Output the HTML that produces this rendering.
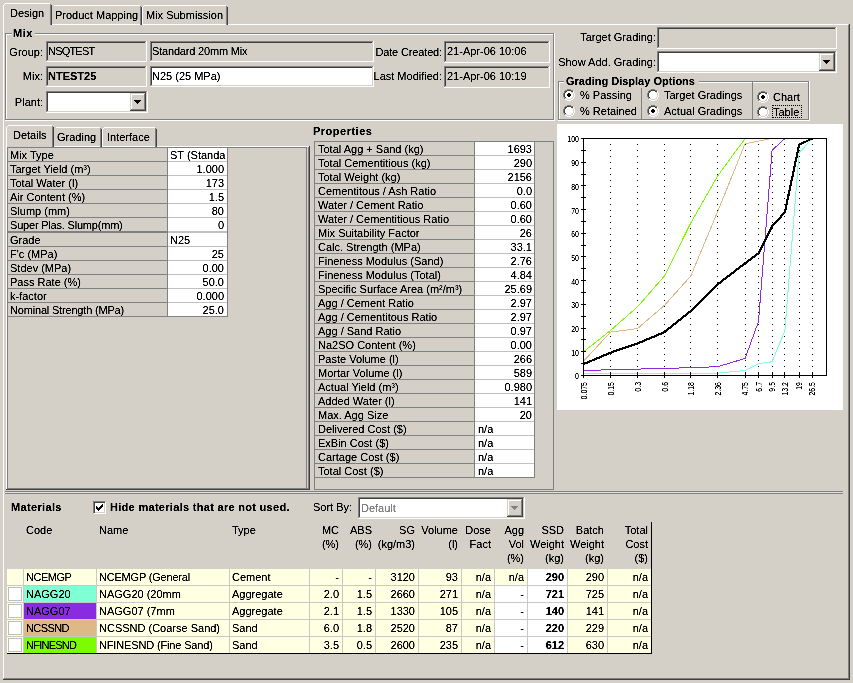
<!DOCTYPE html>
<html><head><meta charset="utf-8"><style>
html,body{margin:0;padding:0;}
body{width:853px;height:683px;overflow:hidden;background:#D4D0C8;position:relative;font-family:"Liberation Sans",sans-serif;font-size:11px;}
body div{position:absolute;}
.t{white-space:pre;line-height:13px;font-size:11px;color:#000;}
</style></head><body>
<svg width="0" height="0" style="position:absolute"><filter id="crisp" x="0" y="0" width="100%" height="100%"><feComponentTransfer><feFuncA type="linear" slope="2" intercept="-0.3"/></feComponentTransfer></filter><filter id="crisp2" filterUnits="userSpaceOnUse" x="0" y="0" width="853" height="683"><feComponentTransfer><feFuncA type="linear" slope="2" intercept="-0.3"/></feComponentTransfer></filter></svg><div id="root" style="left:0;top:0;width:853px;height:683px;will-change:transform">
<div style="left:3px;top:24px;width:845px;height:1px;background:#FFFFFF;"></div>
<div style="left:3px;top:24px;width:1px;height:654px;background:#FFFFFF;"></div>
<div style="left:848px;top:25px;width:1px;height:654px;background:#808080;"></div>
<div style="left:849px;top:24px;width:1px;height:656px;background:#404040;"></div>
<div style="left:4px;top:678px;width:845px;height:1px;background:#808080;"></div>
<div style="left:3px;top:679px;width:847px;height:1px;background:#404040;"></div>
<div style="left:54px;top:5px;width:86px;height:1px;background:#FFFFFF;"></div>
<div style="left:140px;top:6px;width:1px;height:19px;background:#808080;"></div>
<div style="left:141px;top:7px;width:1px;height:18px;background:#404040;"></div>
<div style="left:144px;top:5px;width:82px;height:1px;background:#FFFFFF;"></div>
<div style="left:143px;top:6px;width:1px;height:1px;background:#FFFFFF;"></div>
<div style="left:142px;top:7px;width:1px;height:18px;background:#FFFFFF;"></div>
<div style="left:226px;top:6px;width:1px;height:19px;background:#808080;"></div>
<div style="left:227px;top:7px;width:1px;height:18px;background:#404040;"></div>
<div style="left:4px;top:23px;width:46px;height:2px;background:#D4D0C8;"></div>
<div style="left:5px;top:3px;width:45px;height:1px;background:#FFFFFF;"></div>
<div style="left:4px;top:4px;width:1px;height:1px;background:#FFFFFF;"></div>
<div style="left:3px;top:5px;width:1px;height:20px;background:#FFFFFF;"></div>
<div style="left:50px;top:4px;width:1px;height:21px;background:#808080;"></div>
<div style="left:51px;top:5px;width:1px;height:20px;background:#404040;"></div>
<div style="left:5px;top:33px;width:549px;height:1px;background:#808080;"></div>
<div style="left:5px;top:33px;width:1px;height:87px;background:#808080;"></div>
<div style="left:6px;top:34px;width:547px;height:1px;background:#FFFFFF;"></div>
<div style="left:6px;top:34px;width:1px;height:85px;background:#FFFFFF;"></div>
<div style="left:5px;top:120px;width:550px;height:1px;background:#FFFFFF;"></div>
<div style="left:554px;top:33px;width:1px;height:88px;background:#FFFFFF;"></div>
<div style="left:6px;top:119px;width:548px;height:1px;background:#808080;"></div>
<div style="left:553px;top:34px;width:1px;height:86px;background:#808080;"></div>
<div style="left:12px;top:28px;width:23px;height:10px;background:#D4D0C8;"></div>
<div style="left:46px;top:41px;width:101px;height:21px;background:#D4D0C8;"></div>
<div style="left:46px;top:41px;width:100px;height:1px;background:#808080;"></div>
<div style="left:46px;top:41px;width:1px;height:20px;background:#808080;"></div>
<div style="left:47px;top:42px;width:98px;height:1px;background:#404040;"></div>
<div style="left:47px;top:42px;width:1px;height:18px;background:#404040;"></div>
<div style="left:46px;top:61px;width:101px;height:1px;background:#FFFFFF;"></div>
<div style="left:146px;top:41px;width:1px;height:21px;background:#FFFFFF;"></div>
<div style="left:47px;top:60px;width:99px;height:1px;background:#D4D0C8;"></div>
<div style="left:145px;top:42px;width:1px;height:19px;background:#D4D0C8;"></div>
<div style="left:46px;top:66px;width:101px;height:21px;background:#D4D0C8;"></div>
<div style="left:46px;top:66px;width:100px;height:1px;background:#808080;"></div>
<div style="left:46px;top:66px;width:1px;height:20px;background:#808080;"></div>
<div style="left:47px;top:67px;width:98px;height:1px;background:#404040;"></div>
<div style="left:47px;top:67px;width:1px;height:18px;background:#404040;"></div>
<div style="left:46px;top:86px;width:101px;height:1px;background:#FFFFFF;"></div>
<div style="left:146px;top:66px;width:1px;height:21px;background:#FFFFFF;"></div>
<div style="left:47px;top:85px;width:99px;height:1px;background:#D4D0C8;"></div>
<div style="left:145px;top:67px;width:1px;height:19px;background:#D4D0C8;"></div>
<div style="left:46px;top:91px;width:102px;height:22px;background:#FFFFFF;"></div>
<div style="left:46px;top:91px;width:101px;height:1px;background:#808080;"></div>
<div style="left:46px;top:91px;width:1px;height:21px;background:#808080;"></div>
<div style="left:47px;top:92px;width:99px;height:1px;background:#404040;"></div>
<div style="left:47px;top:92px;width:1px;height:19px;background:#404040;"></div>
<div style="left:46px;top:112px;width:102px;height:1px;background:#FFFFFF;"></div>
<div style="left:147px;top:91px;width:1px;height:22px;background:#FFFFFF;"></div>
<div style="left:47px;top:111px;width:100px;height:1px;background:#D4D0C8;"></div>
<div style="left:146px;top:92px;width:1px;height:20px;background:#D4D0C8;"></div>
<div style="left:130px;top:93px;width:16px;height:18px;background:#D4D0C8;"></div>
<div style="left:130px;top:93px;width:15px;height:1px;background:#D4D0C8;"></div>
<div style="left:130px;top:93px;width:1px;height:17px;background:#D4D0C8;"></div>
<div style="left:131px;top:94px;width:13px;height:1px;background:#FFFFFF;"></div>
<div style="left:131px;top:94px;width:1px;height:15px;background:#FFFFFF;"></div>
<div style="left:130px;top:110px;width:16px;height:1px;background:#404040;"></div>
<div style="left:145px;top:93px;width:1px;height:18px;background:#404040;"></div>
<div style="left:131px;top:109px;width:14px;height:1px;background:#808080;"></div>
<div style="left:144px;top:94px;width:1px;height:16px;background:#808080;"></div>
<div style="left:134px;top:100px;width:7px;height:1px;background:#000;"></div>
<div style="left:135px;top:101px;width:5px;height:1px;background:#000;"></div>
<div style="left:136px;top:102px;width:3px;height:1px;background:#000;"></div>
<div style="left:137px;top:103px;width:1px;height:1px;background:#000;"></div>
<div style="left:150px;top:41px;width:224px;height:21px;background:#D4D0C8;"></div>
<div style="left:150px;top:41px;width:223px;height:1px;background:#808080;"></div>
<div style="left:150px;top:41px;width:1px;height:20px;background:#808080;"></div>
<div style="left:151px;top:42px;width:221px;height:1px;background:#404040;"></div>
<div style="left:151px;top:42px;width:1px;height:18px;background:#404040;"></div>
<div style="left:150px;top:61px;width:224px;height:1px;background:#FFFFFF;"></div>
<div style="left:373px;top:41px;width:1px;height:21px;background:#FFFFFF;"></div>
<div style="left:151px;top:60px;width:222px;height:1px;background:#D4D0C8;"></div>
<div style="left:372px;top:42px;width:1px;height:19px;background:#D4D0C8;"></div>
<div style="left:150px;top:66px;width:224px;height:21px;background:#FFFFFF;"></div>
<div style="left:150px;top:66px;width:223px;height:1px;background:#808080;"></div>
<div style="left:150px;top:66px;width:1px;height:20px;background:#808080;"></div>
<div style="left:151px;top:67px;width:221px;height:1px;background:#404040;"></div>
<div style="left:151px;top:67px;width:1px;height:18px;background:#404040;"></div>
<div style="left:150px;top:86px;width:224px;height:1px;background:#FFFFFF;"></div>
<div style="left:373px;top:66px;width:1px;height:21px;background:#FFFFFF;"></div>
<div style="left:151px;top:85px;width:222px;height:1px;background:#D4D0C8;"></div>
<div style="left:372px;top:67px;width:1px;height:19px;background:#D4D0C8;"></div>
<div style="left:444px;top:41px;width:106px;height:22px;background:#D4D0C8;"></div>
<div style="left:444px;top:41px;width:105px;height:1px;background:#808080;"></div>
<div style="left:444px;top:41px;width:1px;height:21px;background:#808080;"></div>
<div style="left:445px;top:42px;width:103px;height:1px;background:#404040;"></div>
<div style="left:445px;top:42px;width:1px;height:19px;background:#404040;"></div>
<div style="left:444px;top:62px;width:106px;height:1px;background:#FFFFFF;"></div>
<div style="left:549px;top:41px;width:1px;height:22px;background:#FFFFFF;"></div>
<div style="left:445px;top:61px;width:104px;height:1px;background:#D4D0C8;"></div>
<div style="left:548px;top:42px;width:1px;height:20px;background:#D4D0C8;"></div>
<div style="left:444px;top:66px;width:106px;height:22px;background:#D4D0C8;"></div>
<div style="left:444px;top:66px;width:105px;height:1px;background:#808080;"></div>
<div style="left:444px;top:66px;width:1px;height:21px;background:#808080;"></div>
<div style="left:445px;top:67px;width:103px;height:1px;background:#404040;"></div>
<div style="left:445px;top:67px;width:1px;height:19px;background:#404040;"></div>
<div style="left:444px;top:87px;width:106px;height:1px;background:#FFFFFF;"></div>
<div style="left:549px;top:66px;width:1px;height:22px;background:#FFFFFF;"></div>
<div style="left:445px;top:86px;width:104px;height:1px;background:#D4D0C8;"></div>
<div style="left:548px;top:67px;width:1px;height:20px;background:#D4D0C8;"></div>
<div style="left:657px;top:27px;width:180px;height:22px;background:#D4D0C8;"></div>
<div style="left:657px;top:27px;width:179px;height:1px;background:#808080;"></div>
<div style="left:657px;top:27px;width:1px;height:21px;background:#808080;"></div>
<div style="left:658px;top:28px;width:177px;height:1px;background:#404040;"></div>
<div style="left:658px;top:28px;width:1px;height:19px;background:#404040;"></div>
<div style="left:657px;top:48px;width:180px;height:1px;background:#FFFFFF;"></div>
<div style="left:836px;top:27px;width:1px;height:22px;background:#FFFFFF;"></div>
<div style="left:658px;top:47px;width:178px;height:1px;background:#D4D0C8;"></div>
<div style="left:835px;top:28px;width:1px;height:20px;background:#D4D0C8;"></div>
<div style="left:657px;top:51px;width:180px;height:22px;background:#FFFFFF;"></div>
<div style="left:657px;top:51px;width:179px;height:1px;background:#808080;"></div>
<div style="left:657px;top:51px;width:1px;height:21px;background:#808080;"></div>
<div style="left:658px;top:52px;width:177px;height:1px;background:#404040;"></div>
<div style="left:658px;top:52px;width:1px;height:19px;background:#404040;"></div>
<div style="left:657px;top:72px;width:180px;height:1px;background:#FFFFFF;"></div>
<div style="left:836px;top:51px;width:1px;height:22px;background:#FFFFFF;"></div>
<div style="left:658px;top:71px;width:178px;height:1px;background:#D4D0C8;"></div>
<div style="left:835px;top:52px;width:1px;height:20px;background:#D4D0C8;"></div>
<div style="left:819px;top:53px;width:16px;height:18px;background:#D4D0C8;"></div>
<div style="left:819px;top:53px;width:15px;height:1px;background:#D4D0C8;"></div>
<div style="left:819px;top:53px;width:1px;height:17px;background:#D4D0C8;"></div>
<div style="left:820px;top:54px;width:13px;height:1px;background:#FFFFFF;"></div>
<div style="left:820px;top:54px;width:1px;height:15px;background:#FFFFFF;"></div>
<div style="left:819px;top:70px;width:16px;height:1px;background:#404040;"></div>
<div style="left:834px;top:53px;width:1px;height:18px;background:#404040;"></div>
<div style="left:820px;top:69px;width:14px;height:1px;background:#808080;"></div>
<div style="left:833px;top:54px;width:1px;height:16px;background:#808080;"></div>
<div style="left:823px;top:60px;width:7px;height:1px;background:#000;"></div>
<div style="left:824px;top:61px;width:5px;height:1px;background:#000;"></div>
<div style="left:825px;top:62px;width:3px;height:1px;background:#000;"></div>
<div style="left:826px;top:63px;width:1px;height:1px;background:#000;"></div>
<div style="left:558px;top:81px;width:251px;height:1px;background:#808080;"></div>
<div style="left:558px;top:81px;width:1px;height:39px;background:#808080;"></div>
<div style="left:559px;top:82px;width:249px;height:1px;background:#FFFFFF;"></div>
<div style="left:559px;top:82px;width:1px;height:37px;background:#FFFFFF;"></div>
<div style="left:558px;top:120px;width:252px;height:1px;background:#FFFFFF;"></div>
<div style="left:809px;top:81px;width:1px;height:40px;background:#FFFFFF;"></div>
<div style="left:559px;top:119px;width:250px;height:1px;background:#808080;"></div>
<div style="left:808px;top:82px;width:1px;height:38px;background:#808080;"></div>
<div style="left:564px;top:76px;width:135px;height:10px;background:#D4D0C8;"></div>
<div style="left:641px;top:88px;width:1px;height:31px;background:#808080;"></div>
<div style="left:752px;top:82px;width:1px;height:37px;background:#808080;"></div>
<svg style="position:absolute;left:563px;top:89px" width="12" height="12" viewBox="0 0 12 12" shape-rendering="crispEdges"><path d="M4 0h4v1H4zM2 1h2v1H2zM8 1h2v1H8zM1 2h1v2H1zM0 4h1v4H0zM1 8h1v2H1z" fill="#808080"/><path d="M4 1h4v1H4zM2 2h2v1H2zM8 2h2v1H8zM2 3h1v1H2zM1 4h1v4H1zM2 8h1v1H2z" fill="#404040"/><path d="M10 2h1v2h-1zM11 4h1v4h-1zM10 8h1v2h-1zM8 10h2v1H8zM2 10h2v1H2zM4 11h4v1H4z" fill="#FFFFFF"/><path d="M9 3h1v1H9zM10 4h1v4h-1zM9 8h1v1H9zM8 9h2v1H8zM2 9h2v1H2zM4 10h4v1H4z" fill="#D4D0C8"/><path d="M4 2h4v1H4zM3 3h6v1H3zM2 4h8v4H2zM3 8h6v1H3zM4 9h4v1H4z" fill="#FFFFFF"/><path d="M5 4h2v1H5zM4 5h4v2H4zM5 7h2v1H5z" fill="#000"/></svg>
<svg style="position:absolute;left:563px;top:105px" width="12" height="12" viewBox="0 0 12 12" shape-rendering="crispEdges"><path d="M4 0h4v1H4zM2 1h2v1H2zM8 1h2v1H8zM1 2h1v2H1zM0 4h1v4H0zM1 8h1v2H1z" fill="#808080"/><path d="M4 1h4v1H4zM2 2h2v1H2zM8 2h2v1H8zM2 3h1v1H2zM1 4h1v4H1zM2 8h1v1H2z" fill="#404040"/><path d="M10 2h1v2h-1zM11 4h1v4h-1zM10 8h1v2h-1zM8 10h2v1H8zM2 10h2v1H2zM4 11h4v1H4z" fill="#FFFFFF"/><path d="M9 3h1v1H9zM10 4h1v4h-1zM9 8h1v1H9zM8 9h2v1H8zM2 9h2v1H2zM4 10h4v1H4z" fill="#D4D0C8"/><path d="M4 2h4v1H4zM3 3h6v1H3zM2 4h8v4H2zM3 8h6v1H3zM4 9h4v1H4z" fill="#FFFFFF"/></svg>
<svg style="position:absolute;left:647px;top:89px" width="12" height="12" viewBox="0 0 12 12" shape-rendering="crispEdges"><path d="M4 0h4v1H4zM2 1h2v1H2zM8 1h2v1H8zM1 2h1v2H1zM0 4h1v4H0zM1 8h1v2H1z" fill="#808080"/><path d="M4 1h4v1H4zM2 2h2v1H2zM8 2h2v1H8zM2 3h1v1H2zM1 4h1v4H1zM2 8h1v1H2z" fill="#404040"/><path d="M10 2h1v2h-1zM11 4h1v4h-1zM10 8h1v2h-1zM8 10h2v1H8zM2 10h2v1H2zM4 11h4v1H4z" fill="#FFFFFF"/><path d="M9 3h1v1H9zM10 4h1v4h-1zM9 8h1v1H9zM8 9h2v1H8zM2 9h2v1H2zM4 10h4v1H4z" fill="#D4D0C8"/><path d="M4 2h4v1H4zM3 3h6v1H3zM2 4h8v4H2zM3 8h6v1H3zM4 9h4v1H4z" fill="#FFFFFF"/></svg>
<svg style="position:absolute;left:647px;top:105px" width="12" height="12" viewBox="0 0 12 12" shape-rendering="crispEdges"><path d="M4 0h4v1H4zM2 1h2v1H2zM8 1h2v1H8zM1 2h1v2H1zM0 4h1v4H0zM1 8h1v2H1z" fill="#808080"/><path d="M4 1h4v1H4zM2 2h2v1H2zM8 2h2v1H8zM2 3h1v1H2zM1 4h1v4H1zM2 8h1v1H2z" fill="#404040"/><path d="M10 2h1v2h-1zM11 4h1v4h-1zM10 8h1v2h-1zM8 10h2v1H8zM2 10h2v1H2zM4 11h4v1H4z" fill="#FFFFFF"/><path d="M9 3h1v1H9zM10 4h1v4h-1zM9 8h1v1H9zM8 9h2v1H8zM2 9h2v1H2zM4 10h4v1H4z" fill="#D4D0C8"/><path d="M4 2h4v1H4zM3 3h6v1H3zM2 4h8v4H2zM3 8h6v1H3zM4 9h4v1H4z" fill="#FFFFFF"/><path d="M5 4h2v1H5zM4 5h4v2H4zM5 7h2v1H5z" fill="#000"/></svg>
<svg style="position:absolute;left:757px;top:91px" width="12" height="12" viewBox="0 0 12 12" shape-rendering="crispEdges"><path d="M4 0h4v1H4zM2 1h2v1H2zM8 1h2v1H8zM1 2h1v2H1zM0 4h1v4H0zM1 8h1v2H1z" fill="#808080"/><path d="M4 1h4v1H4zM2 2h2v1H2zM8 2h2v1H8zM2 3h1v1H2zM1 4h1v4H1zM2 8h1v1H2z" fill="#404040"/><path d="M10 2h1v2h-1zM11 4h1v4h-1zM10 8h1v2h-1zM8 10h2v1H8zM2 10h2v1H2zM4 11h4v1H4z" fill="#FFFFFF"/><path d="M9 3h1v1H9zM10 4h1v4h-1zM9 8h1v1H9zM8 9h2v1H8zM2 9h2v1H2zM4 10h4v1H4z" fill="#D4D0C8"/><path d="M4 2h4v1H4zM3 3h6v1H3zM2 4h8v4H2zM3 8h6v1H3zM4 9h4v1H4z" fill="#FFFFFF"/><path d="M5 4h2v1H5zM4 5h4v2H4zM5 7h2v1H5z" fill="#000"/></svg>
<svg style="position:absolute;left:757px;top:106px" width="12" height="12" viewBox="0 0 12 12" shape-rendering="crispEdges"><path d="M4 0h4v1H4zM2 1h2v1H2zM8 1h2v1H8zM1 2h1v2H1zM0 4h1v4H0zM1 8h1v2H1z" fill="#808080"/><path d="M4 1h4v1H4zM2 2h2v1H2zM8 2h2v1H8zM2 3h1v1H2zM1 4h1v4H1zM2 8h1v1H2z" fill="#404040"/><path d="M10 2h1v2h-1zM11 4h1v4h-1zM10 8h1v2h-1zM8 10h2v1H8zM2 10h2v1H2zM4 11h4v1H4z" fill="#FFFFFF"/><path d="M9 3h1v1H9zM10 4h1v4h-1zM9 8h1v1H9zM8 9h2v1H8zM2 9h2v1H2zM4 10h4v1H4z" fill="#D4D0C8"/><path d="M4 2h4v1H4zM3 3h6v1H3zM2 4h8v4H2zM3 8h6v1H3zM4 9h4v1H4z" fill="#FFFFFF"/></svg>
<div style="left:772px;top:105px;width:30px;height:13px;box-sizing:border-box;border:1px dotted #000"></div>
<div style="left:7px;top:147px;width:1px;height:341px;background:#808080;"></div>
<div style="left:7px;top:147px;width:300px;height:1px;background:#808080;"></div>
<div style="left:306px;top:147px;width:1px;height:341px;background:#808080;"></div>
<div style="left:6px;top:146px;width:303px;height:1px;background:#FFFFFF;"></div>
<div style="left:6px;top:146px;width:1px;height:343px;background:#FFFFFF;"></div>
<div style="left:308px;top:147px;width:1px;height:342px;background:#808080;"></div>
<div style="left:7px;top:488px;width:302px;height:1px;background:#808080;"></div>
<div style="left:309px;top:146px;width:1px;height:344px;background:#404040;"></div>
<div style="left:6px;top:489px;width:304px;height:1px;background:#404040;"></div>
<div style="left:56px;top:127px;width:44px;height:1px;background:#FFFFFF;"></div>
<div style="left:100px;top:128px;width:1px;height:19px;background:#808080;"></div>
<div style="left:101px;top:129px;width:1px;height:18px;background:#404040;"></div>
<div style="left:104px;top:127px;width:51px;height:1px;background:#FFFFFF;"></div>
<div style="left:103px;top:128px;width:1px;height:1px;background:#FFFFFF;"></div>
<div style="left:102px;top:129px;width:1px;height:18px;background:#FFFFFF;"></div>
<div style="left:155px;top:128px;width:1px;height:19px;background:#808080;"></div>
<div style="left:156px;top:129px;width:1px;height:18px;background:#404040;"></div>
<div style="left:7px;top:145px;width:45px;height:2px;background:#D4D0C8;"></div>
<div style="left:8px;top:125px;width:44px;height:1px;background:#FFFFFF;"></div>
<div style="left:7px;top:126px;width:1px;height:1px;background:#FFFFFF;"></div>
<div style="left:6px;top:127px;width:1px;height:20px;background:#FFFFFF;"></div>
<div style="left:52px;top:126px;width:1px;height:21px;background:#808080;"></div>
<div style="left:53px;top:127px;width:1px;height:20px;background:#404040;"></div>
<div style="left:167px;top:148px;width:1px;height:169px;background:#808080;"></div>
<div style="left:227px;top:147px;width:1px;height:170px;background:#808080;"></div>
<div style="left:168px;top:148px;width:59px;height:13px;background:#FFFFFF;"></div>
<div style="left:8px;top:161px;width:159px;height:1px;background:#808080;"></div>
<div style="left:168px;top:161px;width:59px;height:1px;background:#C0C0C0;"></div>
<div style="left:168px;top:162px;width:59px;height:13px;background:#FFFFFF;"></div>
<div style="left:8px;top:175px;width:159px;height:1px;background:#808080;"></div>
<div style="left:168px;top:175px;width:59px;height:1px;background:#C0C0C0;"></div>
<div style="left:168px;top:176px;width:59px;height:13px;background:#FFFFFF;"></div>
<div style="left:8px;top:189px;width:159px;height:1px;background:#808080;"></div>
<div style="left:168px;top:189px;width:59px;height:1px;background:#C0C0C0;"></div>
<div style="left:168px;top:190px;width:59px;height:13px;background:#FFFFFF;"></div>
<div style="left:8px;top:203px;width:159px;height:1px;background:#808080;"></div>
<div style="left:168px;top:203px;width:59px;height:1px;background:#C0C0C0;"></div>
<div style="left:168px;top:204px;width:59px;height:13px;background:#FFFFFF;"></div>
<div style="left:8px;top:217px;width:159px;height:1px;background:#808080;"></div>
<div style="left:168px;top:217px;width:59px;height:1px;background:#C0C0C0;"></div>
<div style="left:168px;top:218px;width:59px;height:13px;background:#FFFFFF;"></div>
<div style="left:8px;top:231px;width:159px;height:1px;background:#808080;"></div>
<div style="left:168px;top:231px;width:59px;height:1px;background:#C0C0C0;"></div>
<div style="left:8px;top:232px;width:159px;height:1px;background:#808080;"></div>
<div style="left:168px;top:232px;width:59px;height:1px;background:#C0C0C0;"></div>
<div style="left:168px;top:233px;width:59px;height:13px;background:#FFFFFF;"></div>
<div style="left:8px;top:246px;width:159px;height:1px;background:#808080;"></div>
<div style="left:168px;top:246px;width:59px;height:1px;background:#C0C0C0;"></div>
<div style="left:168px;top:247px;width:59px;height:13px;background:#FFFFFF;"></div>
<div style="left:8px;top:260px;width:159px;height:1px;background:#808080;"></div>
<div style="left:168px;top:260px;width:59px;height:1px;background:#C0C0C0;"></div>
<div style="left:168px;top:261px;width:59px;height:13px;background:#FFFFFF;"></div>
<div style="left:8px;top:274px;width:159px;height:1px;background:#808080;"></div>
<div style="left:168px;top:274px;width:59px;height:1px;background:#C0C0C0;"></div>
<div style="left:168px;top:275px;width:59px;height:13px;background:#FFFFFF;"></div>
<div style="left:8px;top:288px;width:159px;height:1px;background:#808080;"></div>
<div style="left:168px;top:288px;width:59px;height:1px;background:#C0C0C0;"></div>
<div style="left:168px;top:289px;width:59px;height:13px;background:#FFFFFF;"></div>
<div style="left:8px;top:302px;width:159px;height:1px;background:#808080;"></div>
<div style="left:168px;top:302px;width:59px;height:1px;background:#C0C0C0;"></div>
<div style="left:168px;top:303px;width:59px;height:13px;background:#FFFFFF;"></div>
<div style="left:8px;top:316px;width:220px;height:1px;background:#808080;"></div>
<div style="left:314px;top:141px;width:1px;height:349px;background:#808080;"></div>
<div style="left:314px;top:141px;width:240px;height:1px;background:#808080;"></div>
<div style="left:553px;top:141px;width:1px;height:349px;background:#808080;"></div>
<div style="left:314px;top:489px;width:240px;height:1px;background:#808080;"></div>
<div style="left:474px;top:142px;width:1px;height:336px;background:#808080;"></div>
<div style="left:534px;top:142px;width:1px;height:336px;background:#808080;"></div>
<div style="left:475px;top:142px;width:59px;height:13px;background:#FFFFFF;"></div>
<div style="left:315px;top:155px;width:159px;height:1px;background:#808080;"></div>
<div style="left:475px;top:155px;width:59px;height:1px;background:#C0C0C0;"></div>
<div style="left:475px;top:156px;width:59px;height:13px;background:#FFFFFF;"></div>
<div style="left:315px;top:169px;width:159px;height:1px;background:#808080;"></div>
<div style="left:475px;top:169px;width:59px;height:1px;background:#C0C0C0;"></div>
<div style="left:475px;top:170px;width:59px;height:13px;background:#FFFFFF;"></div>
<div style="left:315px;top:183px;width:159px;height:1px;background:#808080;"></div>
<div style="left:475px;top:183px;width:59px;height:1px;background:#C0C0C0;"></div>
<div style="left:475px;top:184px;width:59px;height:13px;background:#FFFFFF;"></div>
<div style="left:315px;top:197px;width:159px;height:1px;background:#808080;"></div>
<div style="left:475px;top:197px;width:59px;height:1px;background:#C0C0C0;"></div>
<div style="left:475px;top:198px;width:59px;height:13px;background:#FFFFFF;"></div>
<div style="left:315px;top:211px;width:159px;height:1px;background:#808080;"></div>
<div style="left:475px;top:211px;width:59px;height:1px;background:#C0C0C0;"></div>
<div style="left:475px;top:212px;width:59px;height:13px;background:#FFFFFF;"></div>
<div style="left:315px;top:225px;width:159px;height:1px;background:#808080;"></div>
<div style="left:475px;top:225px;width:59px;height:1px;background:#C0C0C0;"></div>
<div style="left:475px;top:226px;width:59px;height:13px;background:#FFFFFF;"></div>
<div style="left:315px;top:239px;width:159px;height:1px;background:#808080;"></div>
<div style="left:475px;top:239px;width:59px;height:1px;background:#C0C0C0;"></div>
<div style="left:475px;top:240px;width:59px;height:13px;background:#FFFFFF;"></div>
<div style="left:315px;top:253px;width:159px;height:1px;background:#808080;"></div>
<div style="left:475px;top:253px;width:59px;height:1px;background:#C0C0C0;"></div>
<div style="left:475px;top:254px;width:59px;height:13px;background:#FFFFFF;"></div>
<div style="left:315px;top:267px;width:159px;height:1px;background:#808080;"></div>
<div style="left:475px;top:267px;width:59px;height:1px;background:#C0C0C0;"></div>
<div style="left:475px;top:268px;width:59px;height:13px;background:#FFFFFF;"></div>
<div style="left:315px;top:281px;width:159px;height:1px;background:#808080;"></div>
<div style="left:475px;top:281px;width:59px;height:1px;background:#C0C0C0;"></div>
<div style="left:475px;top:282px;width:59px;height:13px;background:#FFFFFF;"></div>
<div style="left:315px;top:295px;width:159px;height:1px;background:#808080;"></div>
<div style="left:475px;top:295px;width:59px;height:1px;background:#C0C0C0;"></div>
<div style="left:475px;top:296px;width:59px;height:13px;background:#FFFFFF;"></div>
<div style="left:315px;top:309px;width:159px;height:1px;background:#808080;"></div>
<div style="left:475px;top:309px;width:59px;height:1px;background:#C0C0C0;"></div>
<div style="left:475px;top:310px;width:59px;height:13px;background:#FFFFFF;"></div>
<div style="left:315px;top:323px;width:159px;height:1px;background:#808080;"></div>
<div style="left:475px;top:323px;width:59px;height:1px;background:#C0C0C0;"></div>
<div style="left:475px;top:324px;width:59px;height:13px;background:#FFFFFF;"></div>
<div style="left:315px;top:337px;width:159px;height:1px;background:#808080;"></div>
<div style="left:475px;top:337px;width:59px;height:1px;background:#C0C0C0;"></div>
<div style="left:475px;top:338px;width:59px;height:13px;background:#FFFFFF;"></div>
<div style="left:315px;top:351px;width:159px;height:1px;background:#808080;"></div>
<div style="left:475px;top:351px;width:59px;height:1px;background:#C0C0C0;"></div>
<div style="left:475px;top:352px;width:59px;height:13px;background:#FFFFFF;"></div>
<div style="left:315px;top:365px;width:159px;height:1px;background:#808080;"></div>
<div style="left:475px;top:365px;width:59px;height:1px;background:#C0C0C0;"></div>
<div style="left:475px;top:366px;width:59px;height:13px;background:#FFFFFF;"></div>
<div style="left:315px;top:379px;width:159px;height:1px;background:#808080;"></div>
<div style="left:475px;top:379px;width:59px;height:1px;background:#C0C0C0;"></div>
<div style="left:475px;top:380px;width:59px;height:13px;background:#FFFFFF;"></div>
<div style="left:315px;top:393px;width:159px;height:1px;background:#808080;"></div>
<div style="left:475px;top:393px;width:59px;height:1px;background:#C0C0C0;"></div>
<div style="left:475px;top:394px;width:59px;height:13px;background:#FFFFFF;"></div>
<div style="left:315px;top:407px;width:159px;height:1px;background:#808080;"></div>
<div style="left:475px;top:407px;width:59px;height:1px;background:#C0C0C0;"></div>
<div style="left:475px;top:408px;width:59px;height:13px;background:#FFFFFF;"></div>
<div style="left:315px;top:421px;width:159px;height:1px;background:#808080;"></div>
<div style="left:475px;top:421px;width:59px;height:1px;background:#C0C0C0;"></div>
<div style="left:475px;top:422px;width:59px;height:13px;background:#FFFFFF;"></div>
<div style="left:315px;top:435px;width:159px;height:1px;background:#808080;"></div>
<div style="left:475px;top:435px;width:59px;height:1px;background:#C0C0C0;"></div>
<div style="left:475px;top:436px;width:59px;height:13px;background:#FFFFFF;"></div>
<div style="left:315px;top:449px;width:159px;height:1px;background:#808080;"></div>
<div style="left:475px;top:449px;width:59px;height:1px;background:#C0C0C0;"></div>
<div style="left:475px;top:450px;width:59px;height:13px;background:#FFFFFF;"></div>
<div style="left:315px;top:463px;width:159px;height:1px;background:#808080;"></div>
<div style="left:475px;top:463px;width:59px;height:1px;background:#C0C0C0;"></div>
<div style="left:475px;top:464px;width:59px;height:13px;background:#FFFFFF;"></div>
<div style="left:315px;top:477px;width:220px;height:1px;background:#808080;"></div>
<div style="left:557px;top:124px;width:286px;height:286px;background:#FFFFFF;"></div>
<svg style="position:absolute;left:0;top:0" width="853" height="683"><path d="M610 144h1v1h-1zM610 150h1v1h-1zM610 156h1v1h-1zM610 162h1v1h-1zM610 168h1v1h-1zM610 174h1v1h-1zM610 180h1v1h-1zM610 186h1v1h-1zM610 192h1v1h-1zM610 198h1v1h-1zM610 204h1v1h-1zM610 210h1v1h-1zM610 216h1v1h-1zM610 222h1v1h-1zM610 228h1v1h-1zM610 234h1v1h-1zM610 240h1v1h-1zM610 246h1v1h-1zM610 252h1v1h-1zM610 258h1v1h-1zM610 264h1v1h-1zM610 270h1v1h-1zM610 276h1v1h-1zM610 282h1v1h-1zM610 288h1v1h-1zM610 294h1v1h-1zM610 300h1v1h-1zM610 306h1v1h-1zM610 312h1v1h-1zM610 318h1v1h-1zM610 324h1v1h-1zM610 330h1v1h-1zM610 336h1v1h-1zM610 342h1v1h-1zM610 348h1v1h-1zM610 354h1v1h-1zM610 360h1v1h-1zM610 366h1v1h-1zM610 372h1v1h-1zM637 144h1v1h-1zM637 150h1v1h-1zM637 156h1v1h-1zM637 162h1v1h-1zM637 168h1v1h-1zM637 174h1v1h-1zM637 180h1v1h-1zM637 186h1v1h-1zM637 192h1v1h-1zM637 198h1v1h-1zM637 204h1v1h-1zM637 210h1v1h-1zM637 216h1v1h-1zM637 222h1v1h-1zM637 228h1v1h-1zM637 234h1v1h-1zM637 240h1v1h-1zM637 246h1v1h-1zM637 252h1v1h-1zM637 258h1v1h-1zM637 264h1v1h-1zM637 270h1v1h-1zM637 276h1v1h-1zM637 282h1v1h-1zM637 288h1v1h-1zM637 294h1v1h-1zM637 300h1v1h-1zM637 306h1v1h-1zM637 312h1v1h-1zM637 318h1v1h-1zM637 324h1v1h-1zM637 330h1v1h-1zM637 336h1v1h-1zM637 342h1v1h-1zM637 348h1v1h-1zM637 354h1v1h-1zM637 360h1v1h-1zM637 366h1v1h-1zM637 372h1v1h-1zM664 144h1v1h-1zM664 150h1v1h-1zM664 156h1v1h-1zM664 162h1v1h-1zM664 168h1v1h-1zM664 174h1v1h-1zM664 180h1v1h-1zM664 186h1v1h-1zM664 192h1v1h-1zM664 198h1v1h-1zM664 204h1v1h-1zM664 210h1v1h-1zM664 216h1v1h-1zM664 222h1v1h-1zM664 228h1v1h-1zM664 234h1v1h-1zM664 240h1v1h-1zM664 246h1v1h-1zM664 252h1v1h-1zM664 258h1v1h-1zM664 264h1v1h-1zM664 270h1v1h-1zM664 276h1v1h-1zM664 282h1v1h-1zM664 288h1v1h-1zM664 294h1v1h-1zM664 300h1v1h-1zM664 306h1v1h-1zM664 312h1v1h-1zM664 318h1v1h-1zM664 324h1v1h-1zM664 330h1v1h-1zM664 336h1v1h-1zM664 342h1v1h-1zM664 348h1v1h-1zM664 354h1v1h-1zM664 360h1v1h-1zM664 366h1v1h-1zM664 372h1v1h-1zM690 144h1v1h-1zM690 150h1v1h-1zM690 156h1v1h-1zM690 162h1v1h-1zM690 168h1v1h-1zM690 174h1v1h-1zM690 180h1v1h-1zM690 186h1v1h-1zM690 192h1v1h-1zM690 198h1v1h-1zM690 204h1v1h-1zM690 210h1v1h-1zM690 216h1v1h-1zM690 222h1v1h-1zM690 228h1v1h-1zM690 234h1v1h-1zM690 240h1v1h-1zM690 246h1v1h-1zM690 252h1v1h-1zM690 258h1v1h-1zM690 264h1v1h-1zM690 270h1v1h-1zM690 276h1v1h-1zM690 282h1v1h-1zM690 288h1v1h-1zM690 294h1v1h-1zM690 300h1v1h-1zM690 306h1v1h-1zM690 312h1v1h-1zM690 318h1v1h-1zM690 324h1v1h-1zM690 330h1v1h-1zM690 336h1v1h-1zM690 342h1v1h-1zM690 348h1v1h-1zM690 354h1v1h-1zM690 360h1v1h-1zM690 366h1v1h-1zM690 372h1v1h-1zM717 144h1v1h-1zM717 150h1v1h-1zM717 156h1v1h-1zM717 162h1v1h-1zM717 168h1v1h-1zM717 174h1v1h-1zM717 180h1v1h-1zM717 186h1v1h-1zM717 192h1v1h-1zM717 198h1v1h-1zM717 204h1v1h-1zM717 210h1v1h-1zM717 216h1v1h-1zM717 222h1v1h-1zM717 228h1v1h-1zM717 234h1v1h-1zM717 240h1v1h-1zM717 246h1v1h-1zM717 252h1v1h-1zM717 258h1v1h-1zM717 264h1v1h-1zM717 270h1v1h-1zM717 276h1v1h-1zM717 282h1v1h-1zM717 288h1v1h-1zM717 294h1v1h-1zM717 300h1v1h-1zM717 306h1v1h-1zM717 312h1v1h-1zM717 318h1v1h-1zM717 324h1v1h-1zM717 330h1v1h-1zM717 336h1v1h-1zM717 342h1v1h-1zM717 348h1v1h-1zM717 354h1v1h-1zM717 360h1v1h-1zM717 366h1v1h-1zM717 372h1v1h-1zM745 144h1v1h-1zM745 150h1v1h-1zM745 156h1v1h-1zM745 162h1v1h-1zM745 168h1v1h-1zM745 174h1v1h-1zM745 180h1v1h-1zM745 186h1v1h-1zM745 192h1v1h-1zM745 198h1v1h-1zM745 204h1v1h-1zM745 210h1v1h-1zM745 216h1v1h-1zM745 222h1v1h-1zM745 228h1v1h-1zM745 234h1v1h-1zM745 240h1v1h-1zM745 246h1v1h-1zM745 252h1v1h-1zM745 258h1v1h-1zM745 264h1v1h-1zM745 270h1v1h-1zM745 276h1v1h-1zM745 282h1v1h-1zM745 288h1v1h-1zM745 294h1v1h-1zM745 300h1v1h-1zM745 306h1v1h-1zM745 312h1v1h-1zM745 318h1v1h-1zM745 324h1v1h-1zM745 330h1v1h-1zM745 336h1v1h-1zM745 342h1v1h-1zM745 348h1v1h-1zM745 354h1v1h-1zM745 360h1v1h-1zM745 366h1v1h-1zM745 372h1v1h-1zM758 144h1v1h-1zM758 150h1v1h-1zM758 156h1v1h-1zM758 162h1v1h-1zM758 168h1v1h-1zM758 174h1v1h-1zM758 180h1v1h-1zM758 186h1v1h-1zM758 192h1v1h-1zM758 198h1v1h-1zM758 204h1v1h-1zM758 210h1v1h-1zM758 216h1v1h-1zM758 222h1v1h-1zM758 228h1v1h-1zM758 234h1v1h-1zM758 240h1v1h-1zM758 246h1v1h-1zM758 252h1v1h-1zM758 258h1v1h-1zM758 264h1v1h-1zM758 270h1v1h-1zM758 276h1v1h-1zM758 282h1v1h-1zM758 288h1v1h-1zM758 294h1v1h-1zM758 300h1v1h-1zM758 306h1v1h-1zM758 312h1v1h-1zM758 318h1v1h-1zM758 324h1v1h-1zM758 330h1v1h-1zM758 336h1v1h-1zM758 342h1v1h-1zM758 348h1v1h-1zM758 354h1v1h-1zM758 360h1v1h-1zM758 366h1v1h-1zM758 372h1v1h-1zM772 144h1v1h-1zM772 150h1v1h-1zM772 156h1v1h-1zM772 162h1v1h-1zM772 168h1v1h-1zM772 174h1v1h-1zM772 180h1v1h-1zM772 186h1v1h-1zM772 192h1v1h-1zM772 198h1v1h-1zM772 204h1v1h-1zM772 210h1v1h-1zM772 216h1v1h-1zM772 222h1v1h-1zM772 228h1v1h-1zM772 234h1v1h-1zM772 240h1v1h-1zM772 246h1v1h-1zM772 252h1v1h-1zM772 258h1v1h-1zM772 264h1v1h-1zM772 270h1v1h-1zM772 276h1v1h-1zM772 282h1v1h-1zM772 288h1v1h-1zM772 294h1v1h-1zM772 300h1v1h-1zM772 306h1v1h-1zM772 312h1v1h-1zM772 318h1v1h-1zM772 324h1v1h-1zM772 330h1v1h-1zM772 336h1v1h-1zM772 342h1v1h-1zM772 348h1v1h-1zM772 354h1v1h-1zM772 360h1v1h-1zM772 366h1v1h-1zM772 372h1v1h-1zM784 144h1v1h-1zM784 150h1v1h-1zM784 156h1v1h-1zM784 162h1v1h-1zM784 168h1v1h-1zM784 174h1v1h-1zM784 180h1v1h-1zM784 186h1v1h-1zM784 192h1v1h-1zM784 198h1v1h-1zM784 204h1v1h-1zM784 210h1v1h-1zM784 216h1v1h-1zM784 222h1v1h-1zM784 228h1v1h-1zM784 234h1v1h-1zM784 240h1v1h-1zM784 246h1v1h-1zM784 252h1v1h-1zM784 258h1v1h-1zM784 264h1v1h-1zM784 270h1v1h-1zM784 276h1v1h-1zM784 282h1v1h-1zM784 288h1v1h-1zM784 294h1v1h-1zM784 300h1v1h-1zM784 306h1v1h-1zM784 312h1v1h-1zM784 318h1v1h-1zM784 324h1v1h-1zM784 330h1v1h-1zM784 336h1v1h-1zM784 342h1v1h-1zM784 348h1v1h-1zM784 354h1v1h-1zM784 360h1v1h-1zM784 366h1v1h-1zM784 372h1v1h-1zM799 144h1v1h-1zM799 150h1v1h-1zM799 156h1v1h-1zM799 162h1v1h-1zM799 168h1v1h-1zM799 174h1v1h-1zM799 180h1v1h-1zM799 186h1v1h-1zM799 192h1v1h-1zM799 198h1v1h-1zM799 204h1v1h-1zM799 210h1v1h-1zM799 216h1v1h-1zM799 222h1v1h-1zM799 228h1v1h-1zM799 234h1v1h-1zM799 240h1v1h-1zM799 246h1v1h-1zM799 252h1v1h-1zM799 258h1v1h-1zM799 264h1v1h-1zM799 270h1v1h-1zM799 276h1v1h-1zM799 282h1v1h-1zM799 288h1v1h-1zM799 294h1v1h-1zM799 300h1v1h-1zM799 306h1v1h-1zM799 312h1v1h-1zM799 318h1v1h-1zM799 324h1v1h-1zM799 330h1v1h-1zM799 336h1v1h-1zM799 342h1v1h-1zM799 348h1v1h-1zM799 354h1v1h-1zM799 360h1v1h-1zM799 366h1v1h-1zM799 372h1v1h-1zM812 144h1v1h-1zM812 150h1v1h-1zM812 156h1v1h-1zM812 162h1v1h-1zM812 168h1v1h-1zM812 174h1v1h-1zM812 180h1v1h-1zM812 186h1v1h-1zM812 192h1v1h-1zM812 198h1v1h-1zM812 204h1v1h-1zM812 210h1v1h-1zM812 216h1v1h-1zM812 222h1v1h-1zM812 228h1v1h-1zM812 234h1v1h-1zM812 240h1v1h-1zM812 246h1v1h-1zM812 252h1v1h-1zM812 258h1v1h-1zM812 264h1v1h-1zM812 270h1v1h-1zM812 276h1v1h-1zM812 282h1v1h-1zM812 288h1v1h-1zM812 294h1v1h-1zM812 300h1v1h-1zM812 306h1v1h-1zM812 312h1v1h-1zM812 318h1v1h-1zM812 324h1v1h-1zM812 330h1v1h-1zM812 336h1v1h-1zM812 342h1v1h-1zM812 348h1v1h-1zM812 354h1v1h-1zM812 360h1v1h-1zM812 366h1v1h-1zM812 372h1v1h-1z" fill="#000" shape-rendering="crispEdges"/><polyline points="583.5,373.8 610.5,373.8 637.5,373.8 664.5,373.8 690.8,373.8 717.8,373.1 745.1,370.5 758.5,363.6 772.1,361.8 784.9,330.5 799.1,152.7 812.1,138.5" fill="none" stroke="#7FFFD4" stroke-width="1" stroke-linejoin="miter" shape-rendering="crispEdges"/><polyline points="583.5,361.3 610.5,332.1 637.5,328.6 664.5,305.3 690.8,276.0 717.8,211.3 745.1,143.7 758.5,141.1 772.1,138.5 784.9,138.5 799.1,138.5 812.1,138.5" fill="none" stroke="#DEB887" stroke-width="1" stroke-linejoin="miter" shape-rendering="crispEdges"/><polyline points="583.5,351.8 610.5,330.5 637.5,306.8 664.5,276.0 690.8,222.9 717.8,175.7 745.1,138.5 758.5,138.5 772.1,138.5 784.9,138.5 799.1,138.5 812.1,138.5" fill="none" stroke="#7CFC00" stroke-width="1" stroke-linejoin="miter" shape-rendering="crispEdges"/><polyline points="583.5,370.8 610.5,369.6 637.5,369.1 664.5,368.4 690.8,367.7 717.8,366.7 745.1,358.4 758.5,321.5 772.1,150.3 784.9,138.5 799.1,138.5 812.1,138.5" fill="none" stroke="#8A2BE2" stroke-width="1" stroke-linejoin="miter" shape-rendering="crispEdges"/><polyline points="583.5,364.1 610.5,352.7 637.5,343.5 664.5,332.1 690.8,311.0 717.8,284.3 745.1,263.2 758.5,253.2 772.1,226.4 784.9,212.2 799.1,144.9 812.1,138.5" fill="none" stroke="#000000" stroke-width="2.2" stroke-linejoin="miter" shape-rendering="crispEdges"/><path d="M583 138h244v1H583zM583 375h244v1H583zM583 138h1v238h-1zM826 138h1v238h-1z" fill="#000" shape-rendering="crispEdges"/><path d="M581 375h5v1h-5zM581 363h5v1h-5zM581 351h5v1h-5zM581 339h5v1h-5zM581 328h5v1h-5zM581 316h5v1h-5zM581 304h5v1h-5zM581 292h5v1h-5zM581 280h5v1h-5zM581 268h5v1h-5zM581 256h5v1h-5zM581 245h5v1h-5zM581 233h5v1h-5zM581 221h5v1h-5zM581 209h5v1h-5zM581 197h5v1h-5zM581 185h5v1h-5zM581 174h5v1h-5zM581 162h5v1h-5zM581 150h5v1h-5zM581 138h5v1h-5zM583 372h1v6h-1zM610 372h1v6h-1zM637 372h1v6h-1zM664 372h1v6h-1zM690 372h1v6h-1zM717 372h1v6h-1zM745 372h1v6h-1zM758 372h1v6h-1zM772 372h1v6h-1zM784 372h1v6h-1zM799 372h1v6h-1zM812 372h1v6h-1z" fill="#000" shape-rendering="crispEdges"/><g filter="url(#crisp2)"><text x="579" y="379.5" text-anchor="end" font-family="Liberation Sans" font-size="8.5" transform="translate(579 0) scale(0.82 1) translate(-579 0)">0</text><text x="579" y="355.8" text-anchor="end" font-family="Liberation Sans" font-size="8.5" transform="translate(579 0) scale(0.82 1) translate(-579 0)">10</text><text x="579" y="332.1" text-anchor="end" font-family="Liberation Sans" font-size="8.5" transform="translate(579 0) scale(0.82 1) translate(-579 0)">20</text><text x="579" y="308.4" text-anchor="end" font-family="Liberation Sans" font-size="8.5" transform="translate(579 0) scale(0.82 1) translate(-579 0)">30</text><text x="579" y="284.7" text-anchor="end" font-family="Liberation Sans" font-size="8.5" transform="translate(579 0) scale(0.82 1) translate(-579 0)">40</text><text x="579" y="261.0" text-anchor="end" font-family="Liberation Sans" font-size="8.5" transform="translate(579 0) scale(0.82 1) translate(-579 0)">50</text><text x="579" y="237.3" text-anchor="end" font-family="Liberation Sans" font-size="8.5" transform="translate(579 0) scale(0.82 1) translate(-579 0)">60</text><text x="579" y="213.6" text-anchor="end" font-family="Liberation Sans" font-size="8.5" transform="translate(579 0) scale(0.82 1) translate(-579 0)">70</text><text x="579" y="189.9" text-anchor="end" font-family="Liberation Sans" font-size="8.5" transform="translate(579 0) scale(0.82 1) translate(-579 0)">80</text><text x="579" y="166.2" text-anchor="end" font-family="Liberation Sans" font-size="8.5" transform="translate(579 0) scale(0.82 1) translate(-579 0)">90</text><text x="579" y="142.5" text-anchor="end" font-family="Liberation Sans" font-size="8.5" transform="translate(579 0) scale(0.82 1) translate(-579 0)">100</text><text x="0" y="0" text-anchor="end" font-family="Liberation Sans" font-size="8.5" transform="translate(586.5 382) rotate(-90) scale(0.82 1)">0.075</text><text x="0" y="0" text-anchor="end" font-family="Liberation Sans" font-size="8.5" transform="translate(613.5 382) rotate(-90) scale(0.82 1)">0.15</text><text x="0" y="0" text-anchor="end" font-family="Liberation Sans" font-size="8.5" transform="translate(640.5 382) rotate(-90) scale(0.82 1)">0.3</text><text x="0" y="0" text-anchor="end" font-family="Liberation Sans" font-size="8.5" transform="translate(667.5 382) rotate(-90) scale(0.82 1)">0.6</text><text x="0" y="0" text-anchor="end" font-family="Liberation Sans" font-size="8.5" transform="translate(693.8 382) rotate(-90) scale(0.82 1)">1.18</text><text x="0" y="0" text-anchor="end" font-family="Liberation Sans" font-size="8.5" transform="translate(720.8 382) rotate(-90) scale(0.82 1)">2.36</text><text x="0" y="0" text-anchor="end" font-family="Liberation Sans" font-size="8.5" transform="translate(748.1 382) rotate(-90) scale(0.82 1)">4.75</text><text x="0" y="0" text-anchor="end" font-family="Liberation Sans" font-size="8.5" transform="translate(761.5 382) rotate(-90) scale(0.82 1)">6.7</text><text x="0" y="0" text-anchor="end" font-family="Liberation Sans" font-size="8.5" transform="translate(775.1 382) rotate(-90) scale(0.82 1)">9.5</text><text x="0" y="0" text-anchor="end" font-family="Liberation Sans" font-size="8.5" transform="translate(787.9 382) rotate(-90) scale(0.82 1)">13.2</text><text x="0" y="0" text-anchor="end" font-family="Liberation Sans" font-size="8.5" transform="translate(802.1 382) rotate(-90) scale(0.82 1)">19</text><text x="0" y="0" text-anchor="end" font-family="Liberation Sans" font-size="8.5" transform="translate(815.1 382) rotate(-90) scale(0.82 1)">26.5</text></g></svg>
<div style="left:5px;top:491px;width:838px;height:1px;background:#808080;"></div>
<div style="left:5px;top:492px;width:838px;height:1px;background:#E4E1DA;"></div>
<div style="left:5px;top:493px;width:838px;height:1px;background:#808080;"></div>
<div style="left:93px;top:501px;width:13px;height:13px;box-sizing:border-box;background:#fff;border-style:solid;border-width:1px;border-color:#808080 #fff #fff #808080;box-shadow:inset 1px 1px #404040,inset -1px -1px #D4D0C8"></div>
<svg style="position:absolute;left:96px;top:504px" width="7" height="7" shape-rendering="crispEdges"><path d="M6 0h1v3H6zM5 1h1v3H5zM4 2h1v3H4zM3 3h1v3H3zM2 4h1v3H2zM1 3h1v3H1zM0 2h1v3H0z" fill="#000"/></svg>
<div style="left:358px;top:497px;width:167px;height:22px;background:#FFFFFF;"></div>
<div style="left:358px;top:497px;width:166px;height:1px;background:#808080;"></div>
<div style="left:358px;top:497px;width:1px;height:21px;background:#808080;"></div>
<div style="left:359px;top:498px;width:164px;height:1px;background:#404040;"></div>
<div style="left:359px;top:498px;width:1px;height:19px;background:#404040;"></div>
<div style="left:358px;top:518px;width:167px;height:1px;background:#FFFFFF;"></div>
<div style="left:524px;top:497px;width:1px;height:22px;background:#FFFFFF;"></div>
<div style="left:359px;top:517px;width:165px;height:1px;background:#D4D0C8;"></div>
<div style="left:523px;top:498px;width:1px;height:20px;background:#D4D0C8;"></div>
<div style="left:507px;top:499px;width:16px;height:18px;background:#D4D0C8;"></div>
<div style="left:507px;top:499px;width:15px;height:1px;background:#D4D0C8;"></div>
<div style="left:507px;top:499px;width:1px;height:17px;background:#D4D0C8;"></div>
<div style="left:508px;top:500px;width:13px;height:1px;background:#FFFFFF;"></div>
<div style="left:508px;top:500px;width:1px;height:15px;background:#FFFFFF;"></div>
<div style="left:507px;top:516px;width:16px;height:1px;background:#404040;"></div>
<div style="left:522px;top:499px;width:1px;height:18px;background:#404040;"></div>
<div style="left:508px;top:515px;width:14px;height:1px;background:#808080;"></div>
<div style="left:521px;top:500px;width:1px;height:16px;background:#808080;"></div>
<div style="left:511px;top:506px;width:7px;height:1px;background:#808080;"></div>
<div style="left:512px;top:507px;width:5px;height:1px;background:#808080;"></div>
<div style="left:513px;top:508px;width:3px;height:1px;background:#808080;"></div>
<div style="left:514px;top:509px;width:1px;height:1px;background:#808080;"></div>
<div style="left:651px;top:522px;width:1px;height:132px;background:#000;"></div>
<div style="left:7px;top:569px;width:644px;height:16px;background:#FFFFE1;"></div>
<div style="left:528px;top:569px;width:39px;height:16px;background:#FFFFFF;"></div>
<div style="left:7px;top:585px;width:644px;height:1px;background:#C8C8C8;"></div>
<div style="left:23px;top:569px;width:1px;height:17px;background:#C8C8C8;"></div>
<div style="left:96px;top:569px;width:1px;height:17px;background:#C8C8C8;"></div>
<div style="left:229px;top:569px;width:1px;height:17px;background:#C8C8C8;"></div>
<div style="left:309px;top:569px;width:1px;height:17px;background:#C8C8C8;"></div>
<div style="left:342px;top:569px;width:1px;height:17px;background:#C8C8C8;"></div>
<div style="left:375px;top:569px;width:1px;height:17px;background:#C8C8C8;"></div>
<div style="left:418px;top:569px;width:1px;height:17px;background:#C8C8C8;"></div>
<div style="left:461px;top:569px;width:1px;height:17px;background:#C8C8C8;"></div>
<div style="left:494px;top:569px;width:1px;height:17px;background:#C8C8C8;"></div>
<div style="left:527px;top:569px;width:1px;height:17px;background:#C8C8C8;"></div>
<div style="left:567px;top:569px;width:1px;height:17px;background:#C8C8C8;"></div>
<div style="left:607px;top:569px;width:1px;height:17px;background:#C8C8C8;"></div>
<div style="left:7px;top:586px;width:644px;height:16px;background:#FFFFE1;"></div>
<div style="left:24px;top:586px;width:72px;height:16px;background:#7FFFD4;"></div>
<div style="left:528px;top:586px;width:39px;height:16px;background:#FFFFFF;"></div>
<div style="left:495px;top:586px;width:32px;height:16px;background:#FFFFFF;"></div>
<div style="left:8px;top:587px;width:14px;height:14px;box-sizing:border-box;background:#fff;border:1px solid #BDBDBD"></div>
<div style="left:7px;top:602px;width:644px;height:1px;background:#C8C8C8;"></div>
<div style="left:23px;top:586px;width:1px;height:17px;background:#C8C8C8;"></div>
<div style="left:96px;top:586px;width:1px;height:17px;background:#C8C8C8;"></div>
<div style="left:229px;top:586px;width:1px;height:17px;background:#C8C8C8;"></div>
<div style="left:309px;top:586px;width:1px;height:17px;background:#C8C8C8;"></div>
<div style="left:342px;top:586px;width:1px;height:17px;background:#C8C8C8;"></div>
<div style="left:375px;top:586px;width:1px;height:17px;background:#C8C8C8;"></div>
<div style="left:418px;top:586px;width:1px;height:17px;background:#C8C8C8;"></div>
<div style="left:461px;top:586px;width:1px;height:17px;background:#C8C8C8;"></div>
<div style="left:494px;top:586px;width:1px;height:17px;background:#C8C8C8;"></div>
<div style="left:527px;top:586px;width:1px;height:17px;background:#C8C8C8;"></div>
<div style="left:567px;top:586px;width:1px;height:17px;background:#C8C8C8;"></div>
<div style="left:607px;top:586px;width:1px;height:17px;background:#C8C8C8;"></div>
<div style="left:7px;top:603px;width:644px;height:16px;background:#FFFFE1;"></div>
<div style="left:24px;top:603px;width:72px;height:16px;background:#8A2BE2;"></div>
<div style="left:528px;top:603px;width:39px;height:16px;background:#FFFFFF;"></div>
<div style="left:495px;top:603px;width:32px;height:16px;background:#FFFFFF;"></div>
<div style="left:8px;top:604px;width:14px;height:14px;box-sizing:border-box;background:#fff;border:1px solid #BDBDBD"></div>
<div style="left:7px;top:619px;width:644px;height:1px;background:#C8C8C8;"></div>
<div style="left:23px;top:603px;width:1px;height:17px;background:#C8C8C8;"></div>
<div style="left:96px;top:603px;width:1px;height:17px;background:#C8C8C8;"></div>
<div style="left:229px;top:603px;width:1px;height:17px;background:#C8C8C8;"></div>
<div style="left:309px;top:603px;width:1px;height:17px;background:#C8C8C8;"></div>
<div style="left:342px;top:603px;width:1px;height:17px;background:#C8C8C8;"></div>
<div style="left:375px;top:603px;width:1px;height:17px;background:#C8C8C8;"></div>
<div style="left:418px;top:603px;width:1px;height:17px;background:#C8C8C8;"></div>
<div style="left:461px;top:603px;width:1px;height:17px;background:#C8C8C8;"></div>
<div style="left:494px;top:603px;width:1px;height:17px;background:#C8C8C8;"></div>
<div style="left:527px;top:603px;width:1px;height:17px;background:#C8C8C8;"></div>
<div style="left:567px;top:603px;width:1px;height:17px;background:#C8C8C8;"></div>
<div style="left:607px;top:603px;width:1px;height:17px;background:#C8C8C8;"></div>
<div style="left:7px;top:620px;width:644px;height:16px;background:#FFFFE1;"></div>
<div style="left:24px;top:620px;width:72px;height:16px;background:#DEB887;"></div>
<div style="left:528px;top:620px;width:39px;height:16px;background:#FFFFFF;"></div>
<div style="left:495px;top:620px;width:32px;height:16px;background:#FFFFFF;"></div>
<div style="left:8px;top:621px;width:14px;height:14px;box-sizing:border-box;background:#fff;border:1px solid #BDBDBD"></div>
<div style="left:7px;top:636px;width:644px;height:1px;background:#C8C8C8;"></div>
<div style="left:23px;top:620px;width:1px;height:17px;background:#C8C8C8;"></div>
<div style="left:96px;top:620px;width:1px;height:17px;background:#C8C8C8;"></div>
<div style="left:229px;top:620px;width:1px;height:17px;background:#C8C8C8;"></div>
<div style="left:309px;top:620px;width:1px;height:17px;background:#C8C8C8;"></div>
<div style="left:342px;top:620px;width:1px;height:17px;background:#C8C8C8;"></div>
<div style="left:375px;top:620px;width:1px;height:17px;background:#C8C8C8;"></div>
<div style="left:418px;top:620px;width:1px;height:17px;background:#C8C8C8;"></div>
<div style="left:461px;top:620px;width:1px;height:17px;background:#C8C8C8;"></div>
<div style="left:494px;top:620px;width:1px;height:17px;background:#C8C8C8;"></div>
<div style="left:527px;top:620px;width:1px;height:17px;background:#C8C8C8;"></div>
<div style="left:567px;top:620px;width:1px;height:17px;background:#C8C8C8;"></div>
<div style="left:607px;top:620px;width:1px;height:17px;background:#C8C8C8;"></div>
<div style="left:7px;top:637px;width:644px;height:16px;background:#FFFFE1;"></div>
<div style="left:24px;top:637px;width:72px;height:16px;background:#7CFC00;"></div>
<div style="left:528px;top:637px;width:39px;height:16px;background:#FFFFFF;"></div>
<div style="left:495px;top:637px;width:32px;height:16px;background:#FFFFFF;"></div>
<div style="left:8px;top:638px;width:14px;height:14px;box-sizing:border-box;background:#fff;border:1px solid #BDBDBD"></div>
<div style="left:7px;top:653px;width:644px;height:1px;background:#C8C8C8;"></div>
<div style="left:23px;top:637px;width:1px;height:17px;background:#C8C8C8;"></div>
<div style="left:96px;top:637px;width:1px;height:17px;background:#C8C8C8;"></div>
<div style="left:229px;top:637px;width:1px;height:17px;background:#C8C8C8;"></div>
<div style="left:309px;top:637px;width:1px;height:17px;background:#C8C8C8;"></div>
<div style="left:342px;top:637px;width:1px;height:17px;background:#C8C8C8;"></div>
<div style="left:375px;top:637px;width:1px;height:17px;background:#C8C8C8;"></div>
<div style="left:418px;top:637px;width:1px;height:17px;background:#C8C8C8;"></div>
<div style="left:461px;top:637px;width:1px;height:17px;background:#C8C8C8;"></div>
<div style="left:494px;top:637px;width:1px;height:17px;background:#C8C8C8;"></div>
<div style="left:527px;top:637px;width:1px;height:17px;background:#C8C8C8;"></div>
<div style="left:567px;top:637px;width:1px;height:17px;background:#C8C8C8;"></div>
<div style="left:607px;top:637px;width:1px;height:17px;background:#C8C8C8;"></div>
<div style="left:7px;top:653px;width:645px;height:1px;background:#000;"></div>
</div>
<div id="txt" style="left:0;top:0;width:853px;height:683px;will-change:transform;filter:url(#crisp)">
<div class="t" style="left:10px;top:7px;color:#000;">Design</div>
<div class="t" style="left:55px;top:9px;color:#000;">Product Mapping</div>
<div class="t" style="left:146px;top:9px;color:#000;">Mix Submission</div>
<div class="t" style="left:13px;top:27px;font-weight:bold;color:#000;letter-spacing:0.5px;">Mix</div>
<div class="t" style="right:810px;top:46px;">Group:</div>
<div class="t" style="right:810px;top:70px;">Mix:</div>
<div class="t" style="right:810px;top:96px;">Plant:</div>
<div class="t" style="left:48px;top:45px;color:#000;letter-spacing:-0.8px;">NSQTEST</div>
<div class="t" style="left:48px;top:70px;font-weight:bold;color:#000;">NTEST25</div>
<div class="t" style="left:152px;top:45px;color:#000;letter-spacing:-0.18px;">Standard 20mm Mix</div>
<div class="t" style="left:152px;top:70px;color:#000;">N25 (25 MPa)</div>
<div class="t" style="right:411px;top:46px;letter-spacing:-0.15px;">Date Created:</div>
<div class="t" style="right:411px;top:70px;">Last Modified:</div>
<div class="t" style="left:447px;top:45px;color:#000;">21-Apr-06 10:06</div>
<div class="t" style="left:447px;top:70px;color:#000;">21-Apr-06 10:19</div>
<div class="t" style="right:197px;top:31px;">Target Grading:</div>
<div class="t" style="right:197px;top:56px;">Show Add. Grading:</div>
<div class="t" style="left:566px;top:75px;font-weight:bold;color:#000;">Grading Display Options</div>
<div class="t" style="left:580px;top:89px;color:#000;">% Passing</div>
<div class="t" style="left:580px;top:105px;color:#000;">% Retained</div>
<div class="t" style="left:664px;top:89px;color:#000;">Target Gradings</div>
<div class="t" style="left:664px;top:105px;color:#000;">Actual Gradings</div>
<div class="t" style="left:773px;top:91px;color:#000;">Chart</div>
<div class="t" style="left:773px;top:106px;color:#000;">Table</div>
<div class="t" style="left:13px;top:129px;color:#000;">Details</div>
<div class="t" style="left:57px;top:131px;color:#000;">Grading</div>
<div class="t" style="left:107px;top:131px;color:#000;">Interface</div>
<div class="t" style="left:10px;top:149px;color:#000;">Mix Type</div>
<div class="t" style="left:170px;top:149px;color:#000;">ST (Standa</div>
<div class="t" style="left:10px;top:163px;color:#000;">Target Yield (m³)</div>
<div class="t" style="right:629px;top:163px;">1.000</div>
<div class="t" style="left:10px;top:177px;color:#000;">Total Water (l)</div>
<div class="t" style="right:629px;top:177px;">173</div>
<div class="t" style="left:10px;top:191px;color:#000;">Air Content (%)</div>
<div class="t" style="right:629px;top:191px;">1.5</div>
<div class="t" style="left:10px;top:205px;color:#000;">Slump (mm)</div>
<div class="t" style="right:629px;top:205px;">80</div>
<div class="t" style="left:10px;top:219px;color:#000;letter-spacing:-0.2px;">Super Plas. Slump(mm)</div>
<div class="t" style="right:629px;top:219px;">0</div>
<div class="t" style="left:10px;top:234px;color:#000;">Grade</div>
<div class="t" style="left:170px;top:234px;color:#000;">N25</div>
<div class="t" style="left:10px;top:248px;color:#000;">F'c (MPa)</div>
<div class="t" style="right:629px;top:248px;">25</div>
<div class="t" style="left:10px;top:262px;color:#000;">Stdev (MPa)</div>
<div class="t" style="right:629px;top:262px;">0.00</div>
<div class="t" style="left:10px;top:276px;color:#000;">Pass Rate (%)</div>
<div class="t" style="right:629px;top:276px;">50.0</div>
<div class="t" style="left:10px;top:290px;color:#000;">k-factor</div>
<div class="t" style="right:629px;top:290px;">0.000</div>
<div class="t" style="left:10px;top:304px;color:#000;letter-spacing:-0.18px;">Nominal Strength (MPa)</div>
<div class="t" style="right:629px;top:304px;">25.0</div>
<div class="t" style="left:313px;top:125px;font-weight:bold;color:#000;letter-spacing:0.5px;">Properties</div>
<div class="t" style="left:318px;top:143px;color:#000;">Total Agg + Sand (kg)</div>
<div class="t" style="right:321px;top:143px;">1693</div>
<div class="t" style="left:318px;top:157px;color:#000;">Total Cementitious (kg)</div>
<div class="t" style="right:321px;top:157px;">290</div>
<div class="t" style="left:318px;top:171px;color:#000;">Total Weight (kg)</div>
<div class="t" style="right:321px;top:171px;">2156</div>
<div class="t" style="left:318px;top:185px;color:#000;">Cementitous / Ash Ratio</div>
<div class="t" style="right:321px;top:185px;">0.0</div>
<div class="t" style="left:318px;top:199px;color:#000;">Water / Cement Ratio</div>
<div class="t" style="right:321px;top:199px;">0.60</div>
<div class="t" style="left:318px;top:213px;color:#000;">Water / Cementitious Ratio</div>
<div class="t" style="right:321px;top:213px;">0.60</div>
<div class="t" style="left:318px;top:227px;color:#000;">Mix Suitability Factor</div>
<div class="t" style="right:321px;top:227px;">26</div>
<div class="t" style="left:318px;top:241px;color:#000;">Calc. Strength (MPa)</div>
<div class="t" style="right:321px;top:241px;">33.1</div>
<div class="t" style="left:318px;top:255px;color:#000;">Fineness Modulus (Sand)</div>
<div class="t" style="right:321px;top:255px;">2.76</div>
<div class="t" style="left:318px;top:269px;color:#000;">Fineness Modulus (Total)</div>
<div class="t" style="right:321px;top:269px;">4.84</div>
<div class="t" style="left:318px;top:283px;color:#000;">Specific Surface Area (m²/m³)</div>
<div class="t" style="right:321px;top:283px;">25.69</div>
<div class="t" style="left:318px;top:297px;color:#000;">Agg / Cement Ratio</div>
<div class="t" style="right:321px;top:297px;">2.97</div>
<div class="t" style="left:318px;top:311px;color:#000;">Agg / Cementitous Ratio</div>
<div class="t" style="right:321px;top:311px;">2.97</div>
<div class="t" style="left:318px;top:325px;color:#000;">Agg / Sand Ratio</div>
<div class="t" style="right:321px;top:325px;">0.97</div>
<div class="t" style="left:318px;top:339px;color:#000;">Na2SO Content (%)</div>
<div class="t" style="right:321px;top:339px;">0.00</div>
<div class="t" style="left:318px;top:353px;color:#000;">Paste Volume (l)</div>
<div class="t" style="right:321px;top:353px;">266</div>
<div class="t" style="left:318px;top:367px;color:#000;">Mortar Volume (l)</div>
<div class="t" style="right:321px;top:367px;">589</div>
<div class="t" style="left:318px;top:381px;color:#000;">Actual Yield (m³)</div>
<div class="t" style="right:321px;top:381px;">0.980</div>
<div class="t" style="left:318px;top:395px;color:#000;">Added Water (l)</div>
<div class="t" style="right:321px;top:395px;">141</div>
<div class="t" style="left:318px;top:409px;color:#000;">Max. Agg Size</div>
<div class="t" style="right:321px;top:409px;">20</div>
<div class="t" style="left:318px;top:423px;color:#000;">Delivered Cost ($)</div>
<div class="t" style="left:478px;top:423px;color:#000;">n/a</div>
<div class="t" style="left:318px;top:437px;color:#000;">ExBin Cost ($)</div>
<div class="t" style="left:478px;top:437px;color:#000;">n/a</div>
<div class="t" style="left:318px;top:451px;color:#000;">Cartage Cost ($)</div>
<div class="t" style="left:478px;top:451px;color:#000;">n/a</div>
<div class="t" style="left:318px;top:465px;color:#000;">Total Cost ($)</div>
<div class="t" style="left:478px;top:465px;color:#000;">n/a</div>
<div class="t" style="left:11px;top:501px;font-weight:bold;color:#000;letter-spacing:0.35px;">Materials</div>
<div class="t" style="left:110px;top:501px;font-weight:bold;color:#000;letter-spacing:0.3px;">Hide materials that are not used.</div>
<div class="t" style="left:313px;top:501px;color:#000;">Sort By:</div>
<div class="t" style="left:361px;top:502px;color:#808080;">Default</div>
<div class="t" style="left:26px;top:524px;color:#000;">Code</div>
<div class="t" style="left:99px;top:524px;color:#000;">Name</div>
<div class="t" style="left:232px;top:524px;color:#000;">Type</div>
<div class="t" style="right:514px;top:524px;">MC</div>
<div class="t" style="right:514px;top:538px;">(%)</div>
<div class="t" style="right:481px;top:524px;">ABS</div>
<div class="t" style="right:481px;top:538px;">(%)</div>
<div class="t" style="right:438px;top:524px;">SG</div>
<div class="t" style="right:438px;top:538px;">(kg/m3)</div>
<div class="t" style="right:395px;top:524px;">Volume</div>
<div class="t" style="right:395px;top:538px;">(l)</div>
<div class="t" style="right:362px;top:524px;">Dose</div>
<div class="t" style="right:362px;top:538px;">Fact</div>
<div class="t" style="right:329px;top:524px;">Agg</div>
<div class="t" style="right:329px;top:538px;">Vol</div>
<div class="t" style="right:329px;top:552px;">(%)</div>
<div class="t" style="right:289px;top:524px;">SSD</div>
<div class="t" style="right:289px;top:538px;">Weight</div>
<div class="t" style="right:289px;top:552px;">(kg)</div>
<div class="t" style="right:249px;top:524px;">Batch</div>
<div class="t" style="right:249px;top:538px;">Weight</div>
<div class="t" style="right:249px;top:552px;">(kg)</div>
<div class="t" style="right:205px;top:524px;">Total</div>
<div class="t" style="right:205px;top:538px;">Cost</div>
<div class="t" style="right:205px;top:552px;">($)</div>
<div class="t" style="left:26px;top:571px;color:#000;letter-spacing:-0.5px;">NCEMGP</div>
<div class="t" style="left:99px;top:571px;color:#000;letter-spacing:-0.2px;">NCEMGP (General</div>
<div class="t" style="left:232px;top:571px;color:#000;">Cement</div>
<div class="t" style="right:514px;top:571px;">-</div>
<div class="t" style="right:481px;top:571px;">-</div>
<div class="t" style="right:438px;top:571px;">3120</div>
<div class="t" style="right:395px;top:571px;">93</div>
<div class="t" style="right:362px;top:571px;">n/a</div>
<div class="t" style="right:329px;top:571px;">n/a</div>
<div class="t" style="right:289px;top:571px;font-weight:bold;">290</div>
<div class="t" style="right:249px;top:571px;">290</div>
<div class="t" style="right:205px;top:571px;">n/a</div>
<div class="t" style="left:26px;top:588px;color:#000;">NAGG20</div>
<div class="t" style="left:99px;top:588px;color:#000;">NAGG20 (20mm</div>
<div class="t" style="left:232px;top:588px;color:#000;">Aggregate</div>
<div class="t" style="right:514px;top:588px;">2.0</div>
<div class="t" style="right:481px;top:588px;">1.5</div>
<div class="t" style="right:438px;top:588px;">2660</div>
<div class="t" style="right:395px;top:588px;">271</div>
<div class="t" style="right:362px;top:588px;">n/a</div>
<div class="t" style="right:329px;top:588px;">-</div>
<div class="t" style="right:289px;top:588px;font-weight:bold;">721</div>
<div class="t" style="right:249px;top:588px;">725</div>
<div class="t" style="right:205px;top:588px;">n/a</div>
<div class="t" style="left:26px;top:605px;color:#000;">NAGG07</div>
<div class="t" style="left:99px;top:605px;color:#000;">NAGG07 (7mm</div>
<div class="t" style="left:232px;top:605px;color:#000;">Aggregate</div>
<div class="t" style="right:514px;top:605px;">2.1</div>
<div class="t" style="right:481px;top:605px;">1.5</div>
<div class="t" style="right:438px;top:605px;">1330</div>
<div class="t" style="right:395px;top:605px;">105</div>
<div class="t" style="right:362px;top:605px;">n/a</div>
<div class="t" style="right:329px;top:605px;">-</div>
<div class="t" style="right:289px;top:605px;font-weight:bold;">140</div>
<div class="t" style="right:249px;top:605px;">141</div>
<div class="t" style="right:205px;top:605px;">n/a</div>
<div class="t" style="left:26px;top:622px;color:#000;letter-spacing:-0.6px;">NCSSND</div>
<div class="t" style="left:99px;top:622px;color:#000;">NCSSND (Coarse Sand)</div>
<div class="t" style="left:232px;top:622px;color:#000;">Sand</div>
<div class="t" style="right:514px;top:622px;">6.0</div>
<div class="t" style="right:481px;top:622px;">1.8</div>
<div class="t" style="right:438px;top:622px;">2520</div>
<div class="t" style="right:395px;top:622px;">87</div>
<div class="t" style="right:362px;top:622px;">n/a</div>
<div class="t" style="right:329px;top:622px;">-</div>
<div class="t" style="right:289px;top:622px;font-weight:bold;">220</div>
<div class="t" style="right:249px;top:622px;">229</div>
<div class="t" style="right:205px;top:622px;">n/a</div>
<div class="t" style="left:26px;top:639px;color:#000;letter-spacing:-0.75px;">NFINESND</div>
<div class="t" style="left:99px;top:639px;color:#000;letter-spacing:-0.15px;">NFINESND (Fine Sand)</div>
<div class="t" style="left:232px;top:639px;color:#000;">Sand</div>
<div class="t" style="right:514px;top:639px;">3.5</div>
<div class="t" style="right:481px;top:639px;">0.5</div>
<div class="t" style="right:438px;top:639px;">2600</div>
<div class="t" style="right:395px;top:639px;">235</div>
<div class="t" style="right:362px;top:639px;">n/a</div>
<div class="t" style="right:329px;top:639px;">-</div>
<div class="t" style="right:289px;top:639px;font-weight:bold;">612</div>
<div class="t" style="right:249px;top:639px;">630</div>
<div class="t" style="right:205px;top:639px;">n/a</div>
</div></body></html>
